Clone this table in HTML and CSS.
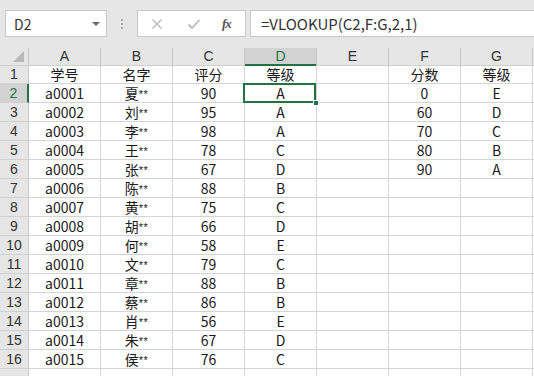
FILE: index.html
```html
<!DOCTYPE html>
<html lang="zh-CN">
<head>
<meta charset="utf-8">
<title>VLOOKUP 等级</title>
<link rel="stylesheet" href="styles.css">
</head>
<body>
<div class="fbar">
  <div class="namebox"><span class="ref">D2</span><span class="caret"></span></div>
  <div class="grip"><i></i><i></i><i></i></div>
  <div class="fnbox">
    <svg class="ico" width="12" height="12" viewBox="0 0 12 12"><path d="M1.5 1.5 L10.5 10.5 M10.5 1.5 L1.5 10.5" stroke="#b9b9b9" stroke-width="1.4" fill="none"/></svg>
    <svg class="ico" width="14" height="12" viewBox="0 0 14 12"><path d="M1.5 6.5 L5 10 L12.5 2" stroke="#b9b9b9" stroke-width="1.8" fill="none"/></svg>
    <span class="fx">fx</span>
  </div>
  <div class="formula">=VLOOKUP(C2,F:G,2,1)</div>
</div>

<div class="sheet">
  <div class="row head">
    <div class="corner"><span class="tri"></span></div>
    <div class="ch">A</div><div class="ch">B</div><div class="ch">C</div><div class="ch sel">D</div><div class="ch">E</div><div class="ch">F</div><div class="ch">G</div><div class="ch"></div>
  </div>
  <div class="row"><div class="rh">1</div><div class="c">学号</div><div class="c">名字</div><div class="c">评分</div><div class="c">等级</div><div class="c"></div><div class="c">分数</div><div class="c">等级</div><div class="c"></div></div>
  <div class="row"><div class="rh sel">2</div><div class="c">a0001</div><div class="c">夏<span class="st">**</span></div><div class="c">90</div><div class="c">A</div><div class="c"></div><div class="c">0</div><div class="c">E</div><div class="c"></div></div>
  <div class="row"><div class="rh">3</div><div class="c">a0002</div><div class="c">刘<span class="st">**</span></div><div class="c">95</div><div class="c">A</div><div class="c"></div><div class="c">60</div><div class="c">D</div><div class="c"></div></div>
  <div class="row"><div class="rh">4</div><div class="c">a0003</div><div class="c">李<span class="st">**</span></div><div class="c">98</div><div class="c">A</div><div class="c"></div><div class="c">70</div><div class="c">C</div><div class="c"></div></div>
  <div class="row"><div class="rh">5</div><div class="c">a0004</div><div class="c">王<span class="st">**</span></div><div class="c">78</div><div class="c">C</div><div class="c"></div><div class="c">80</div><div class="c">B</div><div class="c"></div></div>
  <div class="row"><div class="rh">6</div><div class="c">a0005</div><div class="c">张<span class="st">**</span></div><div class="c">67</div><div class="c">D</div><div class="c"></div><div class="c">90</div><div class="c">A</div><div class="c"></div></div>
  <div class="row"><div class="rh">7</div><div class="c">a0006</div><div class="c">陈<span class="st">**</span></div><div class="c">88</div><div class="c">B</div><div class="c"></div><div class="c"></div><div class="c"></div><div class="c"></div></div>
  <div class="row"><div class="rh">8</div><div class="c">a0007</div><div class="c">黄<span class="st">**</span></div><div class="c">75</div><div class="c">C</div><div class="c"></div><div class="c"></div><div class="c"></div><div class="c"></div></div>
  <div class="row"><div class="rh">9</div><div class="c">a0008</div><div class="c">胡<span class="st">**</span></div><div class="c">66</div><div class="c">D</div><div class="c"></div><div class="c"></div><div class="c"></div><div class="c"></div></div>
  <div class="row"><div class="rh">10</div><div class="c">a0009</div><div class="c">何<span class="st">**</span></div><div class="c">58</div><div class="c">E</div><div class="c"></div><div class="c"></div><div class="c"></div><div class="c"></div></div>
  <div class="row"><div class="rh">11</div><div class="c">a0010</div><div class="c">文<span class="st">**</span></div><div class="c">79</div><div class="c">C</div><div class="c"></div><div class="c"></div><div class="c"></div><div class="c"></div></div>
  <div class="row"><div class="rh">12</div><div class="c">a0011</div><div class="c">章<span class="st">**</span></div><div class="c">88</div><div class="c">B</div><div class="c"></div><div class="c"></div><div class="c"></div><div class="c"></div></div>
  <div class="row"><div class="rh">13</div><div class="c">a0012</div><div class="c">蔡<span class="st">**</span></div><div class="c">86</div><div class="c">B</div><div class="c"></div><div class="c"></div><div class="c"></div><div class="c"></div></div>
  <div class="row"><div class="rh">14</div><div class="c">a0013</div><div class="c">肖<span class="st">**</span></div><div class="c">56</div><div class="c">E</div><div class="c"></div><div class="c"></div><div class="c"></div><div class="c"></div></div>
  <div class="row"><div class="rh">15</div><div class="c">a0014</div><div class="c">朱<span class="st">**</span></div><div class="c">67</div><div class="c">D</div><div class="c"></div><div class="c"></div><div class="c"></div><div class="c"></div></div>
  <div class="row"><div class="rh">16</div><div class="c">a0015</div><div class="c">侯<span class="st">**</span></div><div class="c">76</div><div class="c">C</div><div class="c"></div><div class="c"></div><div class="c"></div><div class="c"></div></div>
  <div class="row"><div class="rh"></div><div class="c"></div><div class="c"></div><div class="c"></div><div class="c"></div><div class="c"></div><div class="c"></div><div class="c"></div><div class="c"></div></div>

  <!-- active cell frame over D2 -->
  <div class="active"><span class="handle"></span></div>
</div>
</body>
</html>
```

FILE: styles.css
```css
* { box-sizing: border-box; }

html, body {
  margin: 0;
  padding: 0;
  width: 534px;
  height: 376px;
  overflow: hidden;
  background: #ffffff;
  font-family: "Noto Sans CJK SC", "Liberation Sans", sans-serif;
  color: #1a1a1a;
}

/* formula bar */
.fbar {
  height: 48px;
  background: #e6e6e6;
  display: flex;
  align-items: flex-start;
  padding-top: 10px;
}

.namebox {
  margin-left: 5px;
  width: 102px;
  height: 27px;
  background: #fff;
  border: 1px solid #c6c6c6;
  display: flex;
  align-items: center;
  justify-content: space-between;
  padding: 0 6px 0 8px;
}

.ref {
  font-size: 14px;
  color: #333;
}

.caret {
  width: 0;
  height: 0;
  border-left: 4px solid transparent;
  border-right: 4px solid transparent;
  border-top: 4px solid #6a6a6a;
}

.grip {
  width: 30px;
  height: 27px;
  display: flex;
  flex-direction: column;
  align-items: center;
  justify-content: center;
  gap: 2px;
}

.grip i {
  display: block;
  width: 2px;
  height: 2px;
  background: #a8a8a8;
}

.fnbox {
  width: 109px;
  height: 27px;
  background: #fff;
  border: 1px solid #c6c6c6;
  display: flex;
  align-items: center;
  padding: 0 0 0 13px;
}

.fnbox .ico:first-child { margin-right: 24px; }
.fnbox .ico:nth-child(2) { margin-right: 21px; }

.fx {
  font-family: "Liberation Serif", "DejaVu Serif", serif;
  font-style: italic;
  font-weight: bold;
  font-size: 13px;
  color: #555;
  letter-spacing: -1px;
}

.formula {
  margin-left: 4px;
  flex: 1;
  height: 27px;
  background: #fff;
  border: 1px solid #c6c6c6;
  border-right: none;
  padding-left: 10px;
  font-size: 15px;
  line-height: 25px;
  color: #333;
  white-space: nowrap;
}

/* sheet grid */
.sheet {
  position: relative;
}

.row {
  display: grid;
  grid-template-columns: 29px repeat(7, 72px) 22px;
  height: 19px;
}

.row.head {
  height: 17px;
}

.c {
  border-right: 1px solid #d4d4d4;
  border-bottom: 1px solid #d4d4d4;
  font-size: 14px;
  line-height: 18px;
  text-align: center;
  white-space: nowrap;
  overflow: hidden;
}

/* masked name stars sit small and raised */
.st {
  font-family: "Liberation Sans", sans-serif;
  font-size: 11px;
  vertical-align: 1px;
  letter-spacing: 0.5px;
}

.rh {
  background: #e6e6e6;
  border-right: 1px solid #c8c8c8;
  border-bottom: 1px solid #d0d0d0;
  font-family: "Liberation Sans", sans-serif;
  font-size: 14px;
  line-height: 18px;
  text-align: center;
  color: #333;
}

.rh.sel {
  background: #d2d2d2;
  color: #217346;
  border-right: 2px solid #217346;
}

.corner {
  position: relative;
  background: #e6e6e6;
  border-right: 1px solid #c8c8c8;
  border-bottom: 1px solid #d0d0d0;
}

.tri {
  position: absolute;
  right: 4px;
  bottom: 3px;
  width: 0;
  height: 0;
  border-left: 11px solid transparent;
  border-bottom: 11px solid #b8b8b8;
}

.ch {
  background: #e6e6e6;
  border-right: 1px solid #c8c8c8;
  border-bottom: 1px solid #d0d0d0;
  font-family: "Liberation Sans", sans-serif;
  font-size: 14px;
  line-height: 16px;
  text-align: center;
  color: #333;
}

.ch.sel {
  background: #d2d2d2;
  color: #217346;
  border-bottom: 2px solid #217346;
}

/* selected cell frame */
.active {
  position: absolute;
  left: 243px;
  top: 35px;
  width: 73px;
  height: 20px;
  border: 2px solid #217346;
}

.handle {
  position: absolute;
  right: -5px;
  bottom: -5px;
  width: 6px;
  height: 6px;
  background: #217346;
  border: 1px solid #fff;
}
```
